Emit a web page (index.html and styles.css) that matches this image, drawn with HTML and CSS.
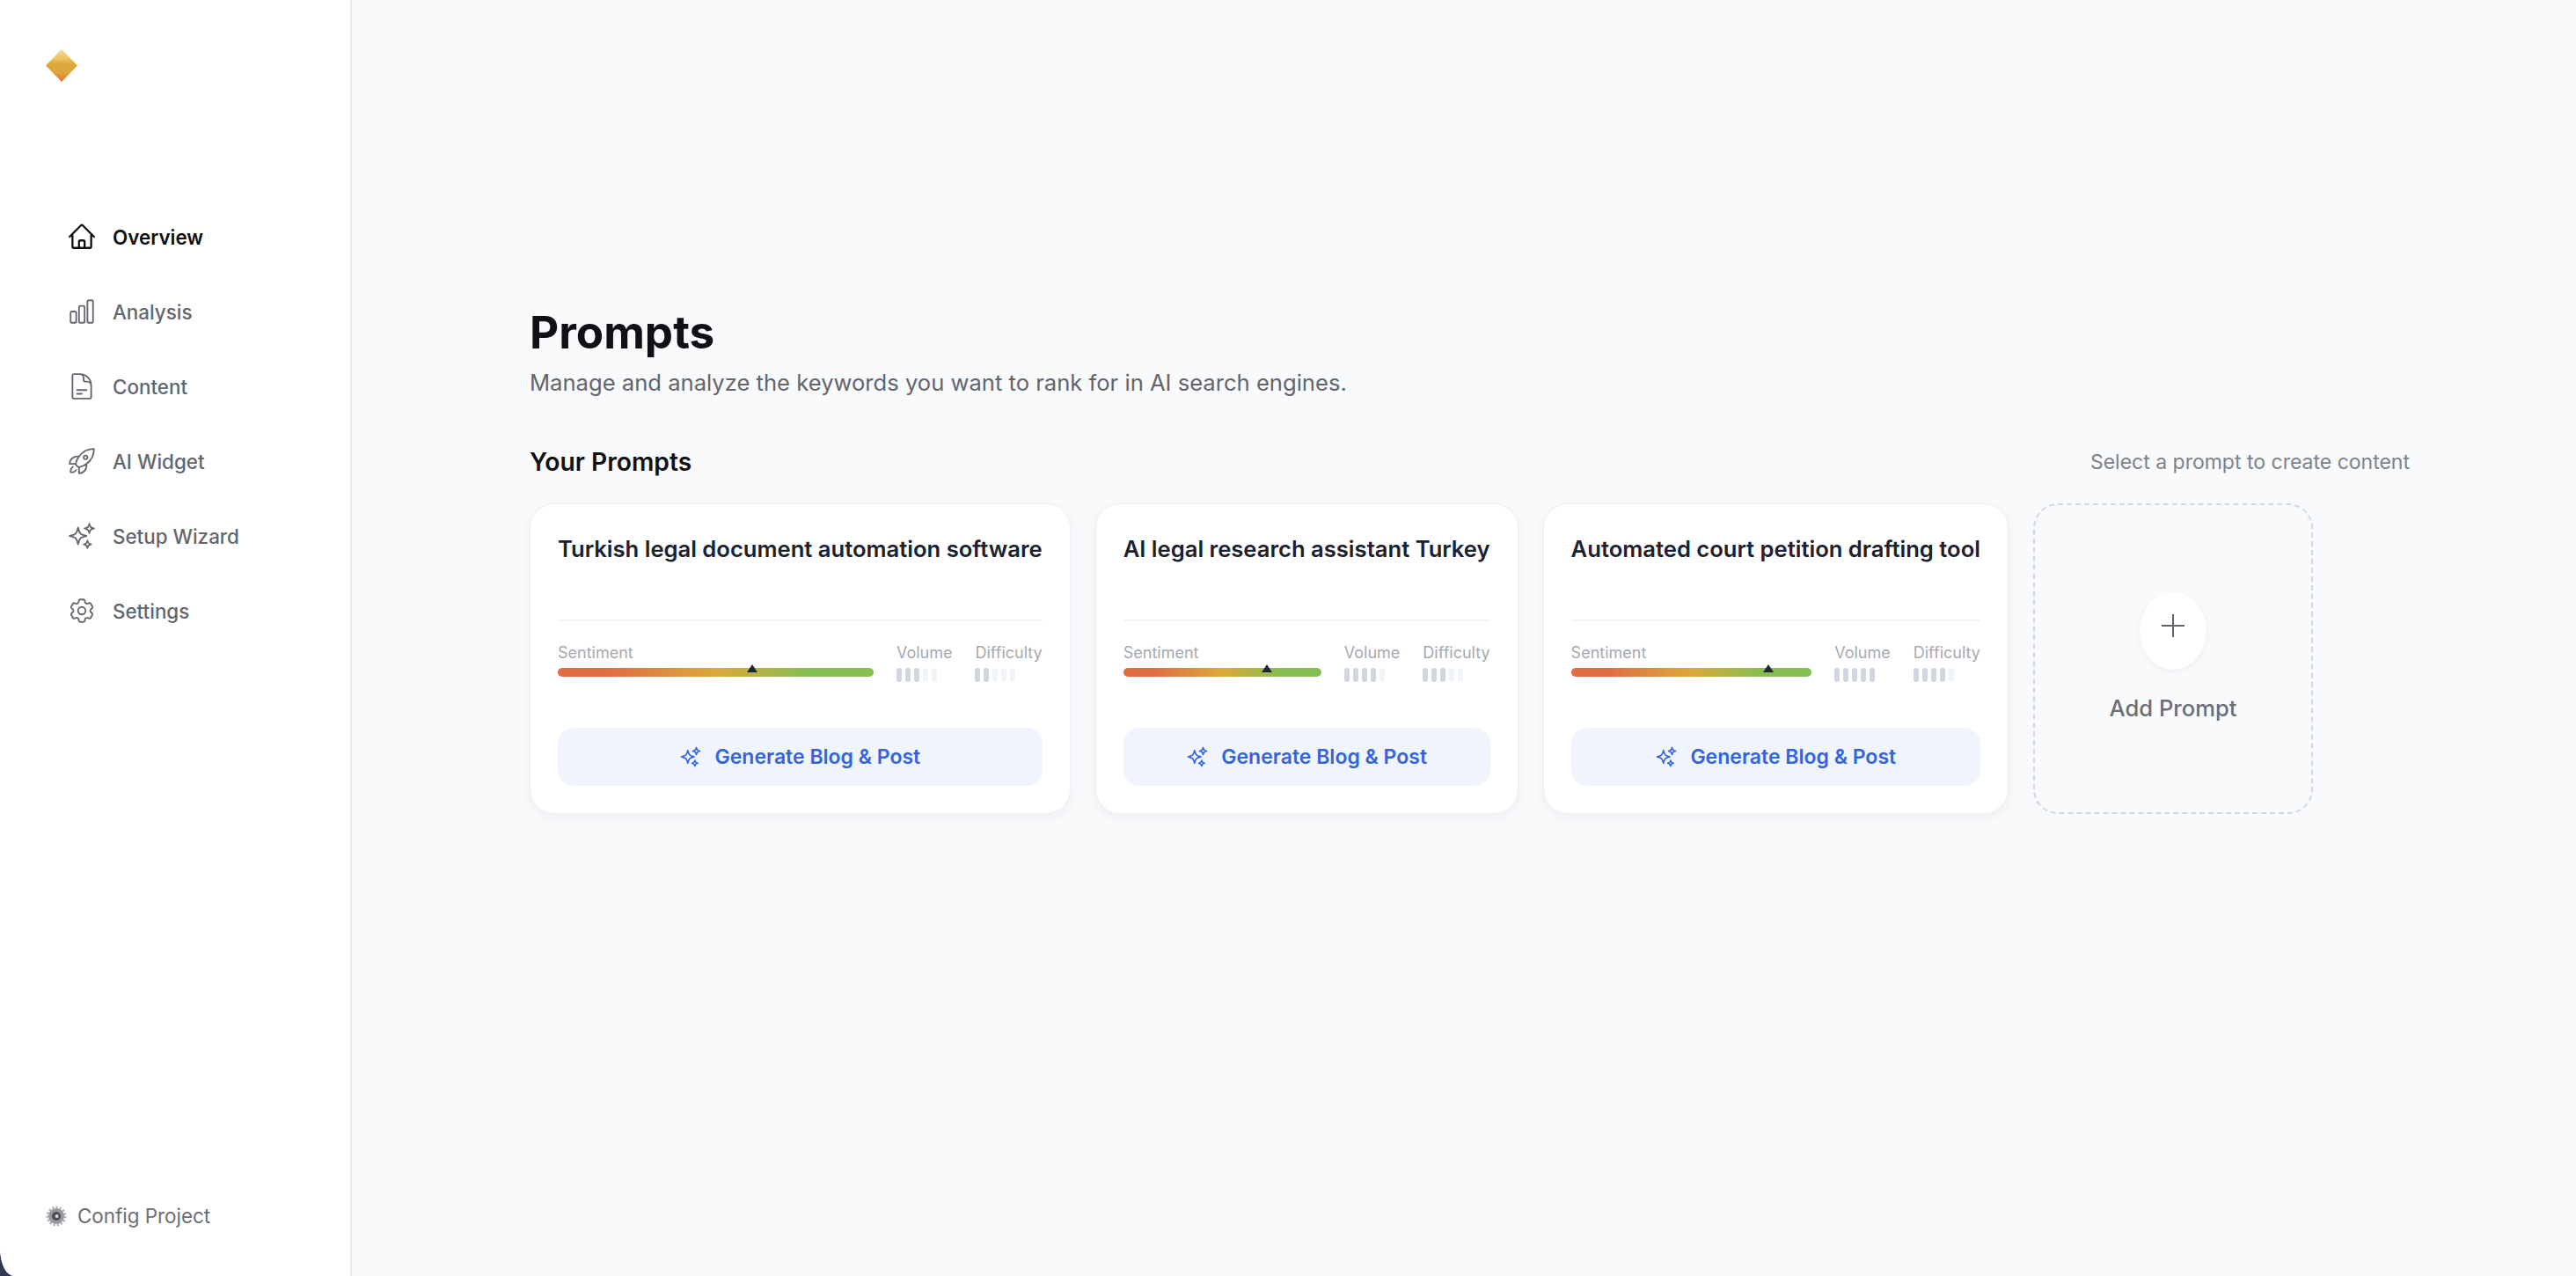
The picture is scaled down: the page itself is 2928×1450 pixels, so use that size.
FILE: index.html
```html
<!DOCTYPE html>
<html lang="en">
<head>
    <meta charset="UTF-8">
    <meta name="viewport" content="width=device-width, initial-scale=1.0">
    <title>Prompts</title>
    <link rel="stylesheet" href="styles.css">
</head>
<body>
    <div class="app">
        <aside class="sidebar">
            <svg class="logo" viewBox="0 0 36 37">
                <defs>
                    <linearGradient id="logo-fill" x1="0" y1="0" x2="0" y2="1">
                        <stop offset="0" stop-color="#f8d99a"/>
                        <stop offset="0.3" stop-color="#f0c15f"/>
                        <stop offset="0.45" stop-color="#dca83b"/>
                        <stop offset="0.7" stop-color="#dca83b"/>
                        <stop offset="1" stop-color="#e8703c"/>
                    </linearGradient>
                </defs>
                <polygon points="18,0 36,18.5 18,37 0,18.5" fill="url(#logo-fill)"/>
            </svg>

            <nav class="nav">
                <a class="nav-item active">
                    <svg class="nav-icon" viewBox="0 0 24 24"><path d="m2.25 12 8.954-8.955c.44-.439 1.152-.439 1.591 0L21.75 12M4.5 9.75v10.125c0 .621.504 1.125 1.125 1.125H9.75v-4.875c0-.621.504-1.125 1.125-1.125h2.25c.621 0 1.125.504 1.125 1.125V21h4.125c.621 0 1.125-.504 1.125-1.125V9.75M8.25 21h8.25"/></svg>
                    Overview
                </a>
                <a class="nav-item">
                    <svg class="nav-icon" viewBox="0 0 24 24"><path d="M3 13.125C3 12.504 3.504 12 4.125 12h2.25c.621 0 1.125.504 1.125 1.125v6.75C7.5 20.496 6.996 21 6.375 21h-2.25A1.125 1.125 0 0 1 3 19.875v-6.75ZM9.75 8.625c0-.621.504-1.125 1.125-1.125h2.25c.621 0 1.125.504 1.125 1.125v11.25c0 .621-.504 1.125-1.125 1.125h-2.25a1.125 1.125 0 0 1-1.125-1.125V8.625ZM16.5 4.125c0-.621.504-1.125 1.125-1.125h2.25C20.496 3 21 3.504 21 4.125v15.75c0 .621-.504 1.125-1.125 1.125h-2.25a1.125 1.125 0 0 1-1.125-1.125V4.125Z"/></svg>
                    Analysis
                </a>
                <a class="nav-item">
                    <svg class="nav-icon" viewBox="0 0 24 24"><path d="M19.5 14.25v-2.625a3.375 3.375 0 0 0-3.375-3.375h-1.5A1.125 1.125 0 0 1 13.5 7.125v-1.5a3.375 3.375 0 0 0-3.375-3.375H8.25m0 12.75h7.5m-7.5 3H12M10.5 2.25H5.625c-.621 0-1.125.504-1.125 1.125v17.25c0 .621.504 1.125 1.125 1.125h12.75c.621 0 1.125-.504 1.125-1.125V11.25a9 9 0 0 0-9-9Z"/></svg>
                    Content
                </a>
                <a class="nav-item">
                    <svg class="nav-icon" viewBox="0 0 24 24"><path d="M15.59 14.37a6 6 0 0 1-5.84 7.38v-4.8m5.84-2.58a14.98 14.98 0 0 0 6.16-12.12A14.98 14.98 0 0 0 9.631 8.41m5.96 5.96a14.926 14.926 0 0 1-5.841 2.58m-.119-8.54a6 6 0 0 0-7.381 5.84h4.8m2.581-5.84a14.927 14.927 0 0 0-2.58 5.84m2.699 2.7c-.103.021-.207.041-.311.06a15.09 15.09 0 0 1-2.448-2.448 14.9 14.9 0 0 1 .06-.312m-2.24 2.39a4.493 4.493 0 0 0-1.757 4.306 4.493 4.493 0 0 0 4.306-1.758M16.5 9a1.5 1.5 0 1 1-3 0 1.5 1.5 0 0 1 3 0Z"/></svg>
                    AI Widget
                </a>
                <a class="nav-item">
                    <svg class="nav-icon" viewBox="0 0 24 24"><path d="M9.813 15.904 9 18.75l-.813-2.846a4.5 4.5 0 0 0-3.09-3.09L2.25 12l2.846-.813a4.5 4.5 0 0 0 3.09-3.09L9 5.25l.813 2.846a4.5 4.5 0 0 0 3.09 3.09L15.75 12l-2.846.813a4.5 4.5 0 0 0-3.09 3.09ZM18.259 8.715 18 9.75l-.259-1.035a3.375 3.375 0 0 0-2.455-2.456L14.25 6l1.036-.259a3.375 3.375 0 0 0 2.455-2.456L18 2.25l.259 1.035a3.375 3.375 0 0 0 2.456 2.456L21.75 6l-1.035.259a3.375 3.375 0 0 0-2.456 2.456ZM16.894 20.567 16.5 21.75l-.394-1.183a2.25 2.25 0 0 0-1.423-1.423L13.5 18.75l1.183-.394a2.25 2.25 0 0 0 1.423-1.423l.394-1.183.394 1.183a2.25 2.25 0 0 0 1.423 1.423l1.183.394-1.183.394a2.25 2.25 0 0 0-1.423 1.423Z"/></svg>
                    Setup Wizard
                </a>
                <a class="nav-item">
                    <svg class="nav-icon" viewBox="0 0 24 24"><path d="M9.594 3.94c.09-.542.56-.94 1.11-.94h2.593c.55 0 1.02.398 1.11.94l.213 1.281c.063.374.313.686.645.87.074.04.147.083.22.127.325.196.72.257 1.075.124l1.217-.456a1.125 1.125 0 0 1 1.37.49l1.296 2.247a1.125 1.125 0 0 1-.26 1.431l-1.003.827c-.293.241-.438.613-.43.992a7.723 7.723 0 0 1 0 .255c-.008.378.137.75.43.991l1.004.827c.424.35.534.955.26 1.43l-1.298 2.247a1.125 1.125 0 0 1-1.369.491l-1.217-.456c-.355-.133-.75-.072-1.076.124a6.47 6.47 0 0 1-.22.128c-.331.183-.581.495-.644.869l-.213 1.281c-.09.543-.56.94-1.11.94h-2.594c-.55 0-1.019-.398-1.11-.94l-.213-1.281c-.062-.374-.312-.686-.644-.87a6.52 6.52 0 0 1-.22-.127c-.325-.196-.72-.257-1.076-.124l-1.217.456a1.125 1.125 0 0 1-1.369-.49l-1.297-2.247a1.125 1.125 0 0 1 .26-1.431l1.004-.827c.292-.24.437-.613.43-.991a6.932 6.932 0 0 1 0-.255c.007-.38-.138-.751-.43-.992l-1.004-.827a1.125 1.125 0 0 1-.26-1.43l1.297-2.247a1.125 1.125 0 0 1 1.37-.491l1.216.456c.356.133.751.072 1.076-.124.072-.044.146-.086.22-.128.332-.183.582-.495.644-.869l.214-1.28Z"/><path d="M15 12a3 3 0 1 1-6 0 3 3 0 0 1 6 0Z"/></svg>
                    Settings
                </a>
            </nav>

            <div class="project">
                <svg class="project-icon" viewBox="0 0 24 24">
                    <circle cx="12" cy="12" r="10" fill="none" stroke="#b3b5b9" stroke-width="3" stroke-dasharray="2.3 1.9"/>
                    <circle cx="12" cy="12" r="9" fill="#96999e"/>
                    <circle cx="12" cy="12" r="5" fill="#4a4d52"/>
                    <circle cx="12.6" cy="12" r="2" fill="#d9dadc"/>
                </svg>
                Config Project
            </div>
        </aside>

        <main class="main">
            <h1 class="page-title">Prompts</h1>
            <p class="page-sub">Manage and analyze the keywords you want to rank for in AI search engines.</p>

            <div class="section-head">
                <h2 class="section-title">Your Prompts</h2>
                <span class="section-hint">Select a prompt to create content</span>
            </div>

            <div class="cards">
                <div class="card">
                    <h3 class="card-title">Turkish legal document automation software</h3>
                    <div class="stats">
                        <div class="stat stat-grow">
                            <span class="stat-label">Sentiment</span>
                            <div class="sentiment"><span class="marker" style="left: 61.5%"></span></div>
                        </div>
                        <div class="stat">
                            <span class="stat-label">Volume</span>
                            <div class="meter"><i class="on"></i><i class="on"></i><i class="on"></i><i></i><i></i></div>
                        </div>
                        <div class="stat">
                            <span class="stat-label">Difficulty</span>
                            <div class="meter"><i class="on"></i><i class="on"></i><i></i><i></i><i></i></div>
                        </div>
                    </div>
                    <button class="gen-btn" type="button">
                        <svg class="gen-icon" viewBox="0 0 24 24"><path d="M9.813 15.904 9 18.75l-.813-2.846a4.5 4.5 0 0 0-3.09-3.09L2.25 12l2.846-.813a4.5 4.5 0 0 0 3.09-3.09L9 5.25l.813 2.846a4.5 4.5 0 0 0 3.09 3.09L15.75 12l-2.846.813a4.5 4.5 0 0 0-3.09 3.09ZM18.259 8.715 18 9.75l-.259-1.035a3.375 3.375 0 0 0-2.455-2.456L14.25 6l1.036-.259a3.375 3.375 0 0 0 2.455-2.456L18 2.25l.259 1.035a3.375 3.375 0 0 0 2.456 2.456L21.75 6l-1.035.259a3.375 3.375 0 0 0-2.456 2.456ZM16.894 20.567 16.5 21.75l-.394-1.183a2.25 2.25 0 0 0-1.423-1.423L13.5 18.75l1.183-.394a2.25 2.25 0 0 0 1.423-1.423l.394-1.183.394 1.183a2.25 2.25 0 0 0 1.423 1.423l1.183.394-1.183.394a2.25 2.25 0 0 0-1.423 1.423Z"/></svg>
                        Generate Blog &amp; Post
                    </button>
                </div>

                <div class="card">
                    <h3 class="card-title">AI legal research assistant Turkey</h3>
                    <div class="stats">
                        <div class="stat stat-grow">
                            <span class="stat-label">Sentiment</span>
                            <div class="sentiment"><span class="marker" style="left: 72.6%"></span></div>
                        </div>
                        <div class="stat">
                            <span class="stat-label">Volume</span>
                            <div class="meter"><i class="on"></i><i class="on"></i><i class="on"></i><i class="on"></i><i></i></div>
                        </div>
                        <div class="stat">
                            <span class="stat-label">Difficulty</span>
                            <div class="meter"><i class="on"></i><i class="on"></i><i class="on"></i><i></i><i></i></div>
                        </div>
                    </div>
                    <button class="gen-btn" type="button">
                        <svg class="gen-icon" viewBox="0 0 24 24"><path d="M9.813 15.904 9 18.75l-.813-2.846a4.5 4.5 0 0 0-3.09-3.09L2.25 12l2.846-.813a4.5 4.5 0 0 0 3.09-3.09L9 5.25l.813 2.846a4.5 4.5 0 0 0 3.09 3.09L15.75 12l-2.846.813a4.5 4.5 0 0 0-3.09 3.09ZM18.259 8.715 18 9.75l-.259-1.035a3.375 3.375 0 0 0-2.455-2.456L14.25 6l1.036-.259a3.375 3.375 0 0 0 2.455-2.456L18 2.25l.259 1.035a3.375 3.375 0 0 0 2.456 2.456L21.75 6l-1.035.259a3.375 3.375 0 0 0-2.456 2.456ZM16.894 20.567 16.5 21.75l-.394-1.183a2.25 2.25 0 0 0-1.423-1.423L13.5 18.75l1.183-.394a2.25 2.25 0 0 0 1.423-1.423l.394-1.183.394 1.183a2.25 2.25 0 0 0 1.423 1.423l1.183.394-1.183.394a2.25 2.25 0 0 0-1.423 1.423Z"/></svg>
                        Generate Blog &amp; Post
                    </button>
                </div>

                <div class="card">
                    <h3 class="card-title">Automated court petition drafting tool</h3>
                    <div class="stats">
                        <div class="stat stat-grow">
                            <span class="stat-label">Sentiment</span>
                            <div class="sentiment"><span class="marker" style="left: 82%"></span></div>
                        </div>
                        <div class="stat">
                            <span class="stat-label">Volume</span>
                            <div class="meter"><i class="on"></i><i class="on"></i><i class="on"></i><i class="on"></i><i class="on"></i></div>
                        </div>
                        <div class="stat">
                            <span class="stat-label">Difficulty</span>
                            <div class="meter"><i class="on"></i><i class="on"></i><i class="on"></i><i class="on"></i><i></i></div>
                        </div>
                    </div>
                    <button class="gen-btn" type="button">
                        <svg class="gen-icon" viewBox="0 0 24 24"><path d="M9.813 15.904 9 18.75l-.813-2.846a4.5 4.5 0 0 0-3.09-3.09L2.25 12l2.846-.813a4.5 4.5 0 0 0 3.09-3.09L9 5.25l.813 2.846a4.5 4.5 0 0 0 3.09 3.09L15.75 12l-2.846.813a4.5 4.5 0 0 0-3.09 3.09ZM18.259 8.715 18 9.75l-.259-1.035a3.375 3.375 0 0 0-2.455-2.456L14.25 6l1.036-.259a3.375 3.375 0 0 0 2.455-2.456L18 2.25l.259 1.035a3.375 3.375 0 0 0 2.456 2.456L21.75 6l-1.035.259a3.375 3.375 0 0 0-2.456 2.456ZM16.894 20.567 16.5 21.75l-.394-1.183a2.25 2.25 0 0 0-1.423-1.423L13.5 18.75l1.183-.394a2.25 2.25 0 0 0 1.423-1.423l.394-1.183.394 1.183a2.25 2.25 0 0 0 1.423 1.423l1.183.394-1.183.394a2.25 2.25 0 0 0-1.423 1.423Z"/></svg>
                        Generate Blog &amp; Post
                    </button>
                </div>

                <div class="add-card">
                    <div class="add-circle">
                        <svg class="add-plus" viewBox="0 0 26 26"><path d="M13 0v26M0 13h26"/></svg>
                    </div>
                    <span class="add-label">Add Prompt</span>
                </div>
            </div>
        </main>
    </div>
</body>
</html>
```

FILE: styles.css
```css
* {
    box-sizing: border-box;
}
html, body {
    height: 100%;
}
body {
    margin: 0;
    background: linear-gradient(45deg, #2f3a52 0, #2f3a52 30px, #f9fafc 30px);
    font-family: Inter, "Noto Sans", sans-serif;
    overflow: hidden;
}
.app {
    display: flex;
    height: 100vh;
    background-color: #f9fafc;
    border-bottom-left-radius: 16px 32px;
    overflow: hidden;
}

/* sidebar */
.sidebar {
    width: 400px;
    flex-shrink: 0;
    display: flex;
    flex-direction: column;
    background-color: #fff;
    border-right: 2px solid #e8eaee;
    padding: 56px 0 0 52px;
}
.logo {
    width: 36px;
    height: 37px;
    flex-shrink: 0;
}
.nav {
    display: flex;
    flex-direction: column;
    margin-top: 151px;
    margin-left: 24px;
    gap: 35px;
}
.nav-item {
    display: flex;
    align-items: center;
    gap: 18px;
    height: 50px;
    font-size: 22.4px;
    font-weight: 500;
    color: #63666d;
}
.nav-item.active {
    color: #0c0d10;
    font-weight: 600;
}
.nav-icon {
    width: 34px;
    height: 34px;
    fill: none;
    stroke: currentColor;
    stroke-width: 1.3;
    stroke-linecap: round;
    stroke-linejoin: round;
}
.nav-item.active .nav-icon {
    stroke-width: 1.6;
}
.project {
    display: flex;
    align-items: center;
    gap: 12px;
    margin-top: auto;
    margin-bottom: 55px;
    font-size: 22.4px;
    color: #6b6e75;
}
.project-icon {
    width: 24px;
    height: 24px;
}

/* main */
.main {
    flex: 1;
    padding: 348px 189px 0 202px;
}
.page-title {
    margin: 0;
    font-size: 51.2px;
    line-height: 58px;
    font-weight: 700;
    color: #0f1114;
}
.page-sub {
    margin: 9px 0 0;
    font-size: 25.6px;
    line-height: 40px;
    color: #62656c;
}
.section-head {
    display: flex;
    justify-content: space-between;
    align-items: center;
    margin-top: 50px;
    height: 40px;
}
.section-title {
    margin: 0;
    font-size: 28.2px;
    font-weight: 600;
    color: #0f1114;
}
.section-hint {
    font-size: 23px;
    color: #7e8289;
}
.cards {
    display: flex;
    align-items: stretch;
    gap: 28px;
    margin-top: 27px;
}

/* prompt card */
.card {
    display: flex;
    flex-direction: column;
    padding: 33px 31px 31px;
    height: 353px;
    background-color: #fff;
    border: 1px solid #edeff3;
    border-radius: 28px;
    box-shadow: 0 4px 14px rgba(30, 40, 60, 0.05);
}
.card-title {
    margin: 0;
    height: 100px;
    border-bottom: 2px solid #f3f4f6;
    font-size: 25.6px;
    line-height: 36px;
    font-weight: 600;
    color: #1a2130;
    white-space: nowrap;
}
.stats {
    display: flex;
    gap: 26px;
    margin-top: 23px;
}
.stat {
    display: flex;
    flex-direction: column;
}
.stat-grow {
    flex: 1;
}
.stat-label {
    font-size: 18px;
    line-height: 26px;
    color: #a6a9b1;
}
.sentiment {
    position: relative;
    height: 10px;
    margin-top: 4px;
    border-radius: 5px;
    background: linear-gradient(90deg, #e06c43 15%, #dca93a 50%, #84bf52 80%);
}
.marker {
    position: absolute;
    top: -4px;
    margin-left: -6px;
    border-left: 6px solid transparent;
    border-right: 6px solid transparent;
    border-bottom: 9px solid #1f2735;
}
.meter {
    display: flex;
    gap: 4px;
    margin-top: 4px;
}
.meter i {
    width: 6px;
    height: 16px;
    border-radius: 3px;
    background-color: #f0f3f8;
}
.meter i.on {
    background-color: #cfd6df;
}
.gen-btn {
    display: flex;
    align-items: center;
    justify-content: center;
    gap: 14px;
    height: 66px;
    margin-top: auto;
    border: none;
    border-radius: 18px;
    background-color: #f0f5fd;
    font-family: inherit;
    font-size: 23px;
    font-weight: 600;
    color: #3563e0;
}
.gen-icon {
    width: 26px;
    height: 26px;
    fill: none;
    stroke: currentColor;
    stroke-width: 1.5;
    stroke-linejoin: round;
}

/* add card */
.add-card {
    display: flex;
    flex-direction: column;
    align-items: center;
    justify-content: center;
    width: 318px;
    height: 353px;
    padding-bottom: 4px;
    border: 2px dashed #d0d7df;
    border-radius: 28px;
}
.add-circle {
    display: flex;
    justify-content: center;
    padding-top: 25px;
    width: 76px;
    height: 88px;
    border-radius: 50%;
    background-color: #fff;
    box-shadow: 0 2px 6px rgba(30, 40, 60, 0.06);
}
.add-plus {
    width: 26px;
    height: 26px;
    fill: none;
    stroke: #63666d;
    stroke-width: 2;
}
.add-label {
    margin-top: 28px;
    font-size: 25.6px;
    line-height: 31px;
    font-weight: 500;
    color: #6b6e75;
}
```
